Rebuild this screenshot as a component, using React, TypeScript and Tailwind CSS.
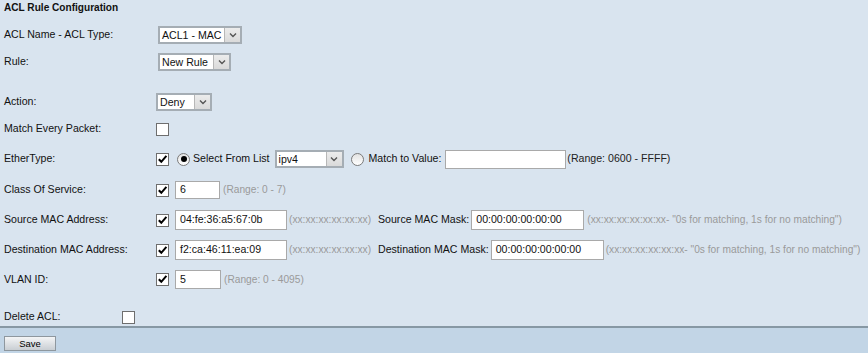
import React from "react";

const font = "font-['Liberation_Sans',Arial,sans-serif]";

export default function App() {
  return (
    <div className={`${font} w-[868px] h-[353px] bg-[#d9e4ef] text-[10.6px] text-[#111] flex flex-col overflow-hidden`}>
      <div className="h-[16px] leading-[16px] pl-[4px] font-bold text-[10.1px]">ACL Rule Configuration</div>

      <Row label="ACL Name - ACL Type:" className="mt-[10px] h-[18px]">
        <Select value="ACL1 - MAC" width="w-[84px]" className="ml-[2px]" />
      </Row>

      <Row label="Rule:" className="mt-[9px] h-[18px]">
        <Select value="New Rule" width="w-[73px]" className="ml-[2px]" />
      </Row>

      <Row label="Action:" className="mt-[22px] h-[18px]">
        <Select value="Deny" width="w-[56px]" />
      </Row>

      <Row label="Match Every Packet:" className="mt-[9px] h-[18px]">
        <Checkbox checked={false} />
      </Row>

      {/* EtherType */}
      <Row label="EtherType:" className="mt-[12px] h-[18px]">
        <Checkbox checked />
        <Radio checked className="ml-[8px]" />
        <span className="ml-[3px]">Select From List</span>
        <Select value="ipv4" width="w-[69px]" className="ml-[5px]" />
        <Radio checked={false} className="ml-[7px]" />
        <span className="ml-[5px]">Match to Value:</span>
        <TextInput value="" width="w-[121px]" className="ml-[4px] h-[19px]" />
        <span className="ml-[1px] text-[#222]">(Range: 0600 - FFFF)</span>
      </Row>

      <Row label="Class Of Service:" className="mt-[13px] h-[18px]">
        <Checkbox checked />
        <TextInput value="6" width="w-[45px]" className="ml-[6px] h-[18px]" />
        <Hint className="ml-[3px]">(Range: 0 - 7)</Hint>
      </Row>

      <Row label="Source MAC Address:" className="mt-[11px] h-[20px]">
        <Checkbox checked />
        <TextInput value="04:fe:36:a5:67:0b" width="w-[112px]" className="ml-[6px] h-[20px]" />
        <Hint className="ml-[2px] w-[86px] shrink-0">(xx:xx:xx:xx:xx:xx)</Hint>
        <span className="pl-[3px] pr-[2px] shrink-0">Source MAC Mask:</span>
        <TextInput value="00:00:00:00:00:00" width="w-[113px]" className="h-[20px]" />
        <Hint className="ml-[3px]">(xx:xx:xx:xx:xx:xx- "0s for matching, 1s for no matching")</Hint>
      </Row>

      <Row label="Destination MAC Address:" className="mt-[10px] h-[20px]">
        <Checkbox checked />
        <TextInput value="f2:ca:46:11:ea:09" width="w-[112px]" className="ml-[6px] h-[20px]" />
        <Hint className="ml-[2px] w-[86px] shrink-0">(xx:xx:xx:xx:xx:xx)</Hint>
        <span className="pl-[3px] pr-[2px] shrink-0">Destination MAC Mask:</span>
        <TextInput value="00:00:00:00:00:00" width="w-[113px]" className="h-[20px]" />
        <Hint className="ml-[2px]">(xx:xx:xx:xx:xx:xx- "0s for matching, 1s for no matching")</Hint>
      </Row>

      <Row label="VLAN ID:" className="mt-[10px] h-[19px]">
        <Checkbox checked />
        <TextInput value="5" width="w-[46px]" className="ml-[6px] h-[19px]" />
        <Hint className="ml-[3px]">(Range: 0 - 4095)</Hint>
      </Row>

      <div className="mt-[20px] h-[16px] flex items-center pl-[4px]">
        <span className="w-[118px]">Delete ACL:</span>
        <Checkbox checked={false} />
      </div>

      {/* footer */}
      <div className="mt-[1px] flex-1 border-t-[2px] border-[#8798a4] bg-[#c2d5e6] pt-[8px] pl-[4px]">
        <button className="w-[52px] h-[15px] border border-[#8e979e] bg-gradient-to-b from-[#f4f5f6] to-[#c9ced3] text-[9.5px] leading-[13px] text-black">
          Save
        </button>
      </div>
    </div>
  );
}

function Row({ label, className, children }: any) {
  return (
    <div className={`flex items-center pl-[4px] whitespace-nowrap ${className}`}>
      <span className="w-[152px] shrink-0">{label}</span>
      {children}
    </div>
  );
}

function Hint({ children, className }: any) {
  return <span className={`text-[#9a9a9a] text-[10.2px] ${className}`}>{children}</span>;
}

function Select({ value, width, className = "" }: any) {
  return (
    <div className={`${width} h-[18px] flex border-2 border-[#a5adb4] bg-white ${className}`}>
      <span className="flex-1 pl-[2px] leading-[14px] text-[#111] overflow-hidden">{value}</span>
      <span className="w-[16px] border-l border-[#b7b7b7] bg-gradient-to-b from-[#ececec] to-[#dadada] flex items-center justify-center">
        <svg width="8" height="6" viewBox="0 0 8 6">
          <path d="M1 1.5 L4 4.5 L7 1.5" stroke="#555" strokeWidth="1.4" fill="none" />
        </svg>
      </span>
    </div>
  );
}

function TextInput({ value, width, className = "" }: any) {
  return (
    <div className={`${width} shrink-0 border border-[#a9a9a9] bg-white flex items-center pl-[4px] text-[#111] ${className}`}>
      {value}
    </div>
  );
}

function Checkbox({ checked, className = "" }: any) {
  return (
    <span className={`w-[13px] h-[13px] shrink-0 border border-[#6e6e6e] bg-white flex items-center justify-center ${className}`}>
      {checked && (
        <svg width="11" height="11" viewBox="0 0 11 11">
          <path d="M1.8 5.2 L4.3 7.8 L9.4 1.8" stroke="#000" strokeWidth="2" fill="none" />
        </svg>
      )}
    </span>
  );
}

function Radio({ checked, className = "" }: any) {
  return (
    <span className={`w-[13px] h-[13px] shrink-0 rounded-full border border-[#7a7a7a] bg-gradient-to-b from-[#e2e2e2] to-white flex items-center justify-center ${className}`}>
      {checked && <span className="w-[6px] h-[6px] rounded-full bg-black" />}
    </span>
  );
}
